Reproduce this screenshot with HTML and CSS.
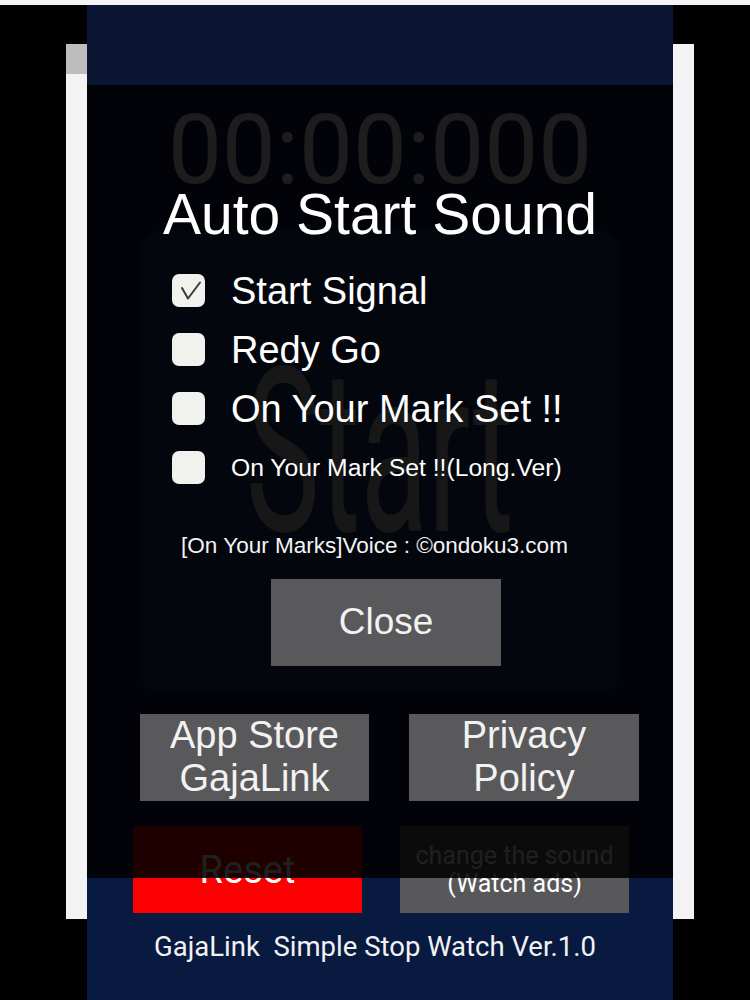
FILE: index.html
```html
<!DOCTYPE html>
<html lang="en">
<head>
<meta charset="utf-8">
<title>Simple Stop Watch</title>
<link rel="stylesheet" href="styles.css">
</head>
<body>
<div class="topline"></div>
<div class="desk">
  <div class="window"><div class="window-tab"></div></div>
  <div class="app">
    <div class="app-top"></div>
    <div class="app-main">
      <div class="timer">00:00:000</div>
      <div class="start-btn"><span class="start-label">Start</span></div>
      <div class="btn-row">
        <div class="btn reset">Reset</div>
        <div class="btn ads">change the sound<br>(Watch ads)</div>
      </div>
      <div class="footer">GajaLink  Simple Stop Watch Ver.1.0</div>
    </div>
    <div class="overlay"></div>
    <div class="modal">
      <div class="modal-title">Auto Start Sound</div>
      <ul class="options">
        <li class="option">
          <span class="box checked">
            <svg viewBox="0 0 33 33" width="33" height="33"><path d="M10 14 L16 24.5 L28 8.5" fill="none" stroke="#3a3a3a" stroke-width="2" stroke-linecap="round" stroke-linejoin="round"/></svg>
          </span>
          <span class="opt-label">Start Signal</span>
        </li>
        <li class="option">
          <span class="box"></span>
          <span class="opt-label">Redy Go</span>
        </li>
        <li class="option">
          <span class="box"></span>
          <span class="opt-label">On Your Mark Set !!</span>
        </li>
        <li class="option">
          <span class="box"></span>
          <span class="opt-label small">On Your Mark Set !!(Long.Ver)</span>
        </li>
      </ul>
      <div class="credit">[On Your Marks]Voice : ©ondoku3.com</div>
      <div class="close-wrap"><div class="gbtn close">Close</div></div>
      <div class="link-row">
        <div class="gbtn link store">App Store<br>GajaLink</div>
        <div class="gbtn link privacy">Privacy<br>Policy</div>
      </div>
    </div>
  </div>
</div>
</body>
</html>
```

FILE: styles.css
```css
html, body {
  margin: 0;
  padding: 0;
  background: #010101;
  overflow: hidden;
}
body {
  width: 750px;
  height: 1000px;
  font-family: "Liberation Sans", Arial, sans-serif;
}
.topline {
  height: 5px;
  background: #f4f4f6;
}
.desk {
  position: relative;
  height: 995px;
}
.window {
  position: absolute;
  left: 66px;
  top: 39px;
  width: 628px;
  height: 875px;
  background: #f3f3f6;
}
.window-tab {
  width: 21px;
  height: 30px;
  background: #bdbdbf;
}
.app {
  position: relative;
  margin-left: 87px;
  width: 586px;
  height: 995px;
  background: #081a40;
}
.app-top {
  height: 80px;
  background: #0a1634;
}
.app-main {
  display: flex;
  flex-direction: column;
  align-items: center;
  font-family: Roboto, "Liberation Sans", sans-serif;
}
.timer {
  margin-top: 17px;
  font-size: 96px;
  line-height: 96px;
  color: #e8e8e8;
}
.start-btn {
  margin-top: 32px;
  width: 480px;
  height: 462px;
  border-radius: 22px;
  background: #24376e;
  display: flex;
  justify-content: center;
  box-sizing: border-box;
  padding-top: 108px;
}
.start-label {
  display: block;
  font-size: 230px;
  line-height: 230px;
  color: #b8b8b8;
  transform: scaleX(0.54);
}
.btn-row {
  margin-top: 134px;
  align-self: stretch;
  display: flex;
  gap: 38px;
  padding-left: 46px;
}
.btn {
  width: 229px;
  height: 87px;
  display: flex;
  align-items: center;
  justify-content: center;
  text-align: center;
  color: #ffffff;
}
.reset {
  background: #fb0000;
  font-size: 38px;
}
.ads {
  background: #58585a;
  font-size: 25px;
  line-height: 28px;
}
.footer {
  margin-top: 20px;
  padding-right: 10px;
  font-size: 27.5px;
  line-height: 27.5px;
  color: #f2f2f4;
  white-space: pre;
}
.overlay {
  position: absolute;
  left: 0;
  right: 0;
  top: 80px;
  height: 793px;
  background: rgba(0, 0, 0, 0.88);
}
.modal {
  position: absolute;
  left: 0;
  right: 0;
  top: 80px;
  display: flex;
  flex-direction: column;
  color: #ffffff;
}
.modal-title {
  margin-top: 101px;
  font-size: 57px;
  line-height: 57px;
  text-align: center;
}
.options {
  list-style: none;
  margin: 18px 0 0;
  padding: 0 0 0 85px;
}
.option {
  height: 59px;
  display: flex;
  align-items: center;
  gap: 26px;
}
.box {
  width: 33px;
  height: 33px;
  border-radius: 7px;
  background: #f1f1ee;
  flex: none;
  display: block;
}
.box svg {
  display: block;
}
.opt-label {
  font-size: 38px;
  line-height: 40px;
}
.opt-label.small {
  font-size: 24.7px;
}
.credit {
  margin-top: 38px;
  padding-right: 11px;
  font-size: 22.5px;
  line-height: 22.5px;
  text-align: center;
  color: #f4f4f4;
}
.close-wrap {
  margin-top: 21px;
  padding-left: 184px;
}
.gbtn {
  background: #59595b;
  color: #f2f2f2;
  display: flex;
  align-items: center;
  justify-content: center;
  text-align: center;
}
.close {
  width: 230px;
  height: 87px;
  font-size: 37px;
}
.link-row {
  margin-top: 48px;
  display: flex;
  gap: 40px;
  padding-left: 53px;
}
.link {
  width: 229px;
  height: 87px;
  font-size: 38px;
  line-height: 43px;
}
.privacy {
  width: 230px;
}
```
